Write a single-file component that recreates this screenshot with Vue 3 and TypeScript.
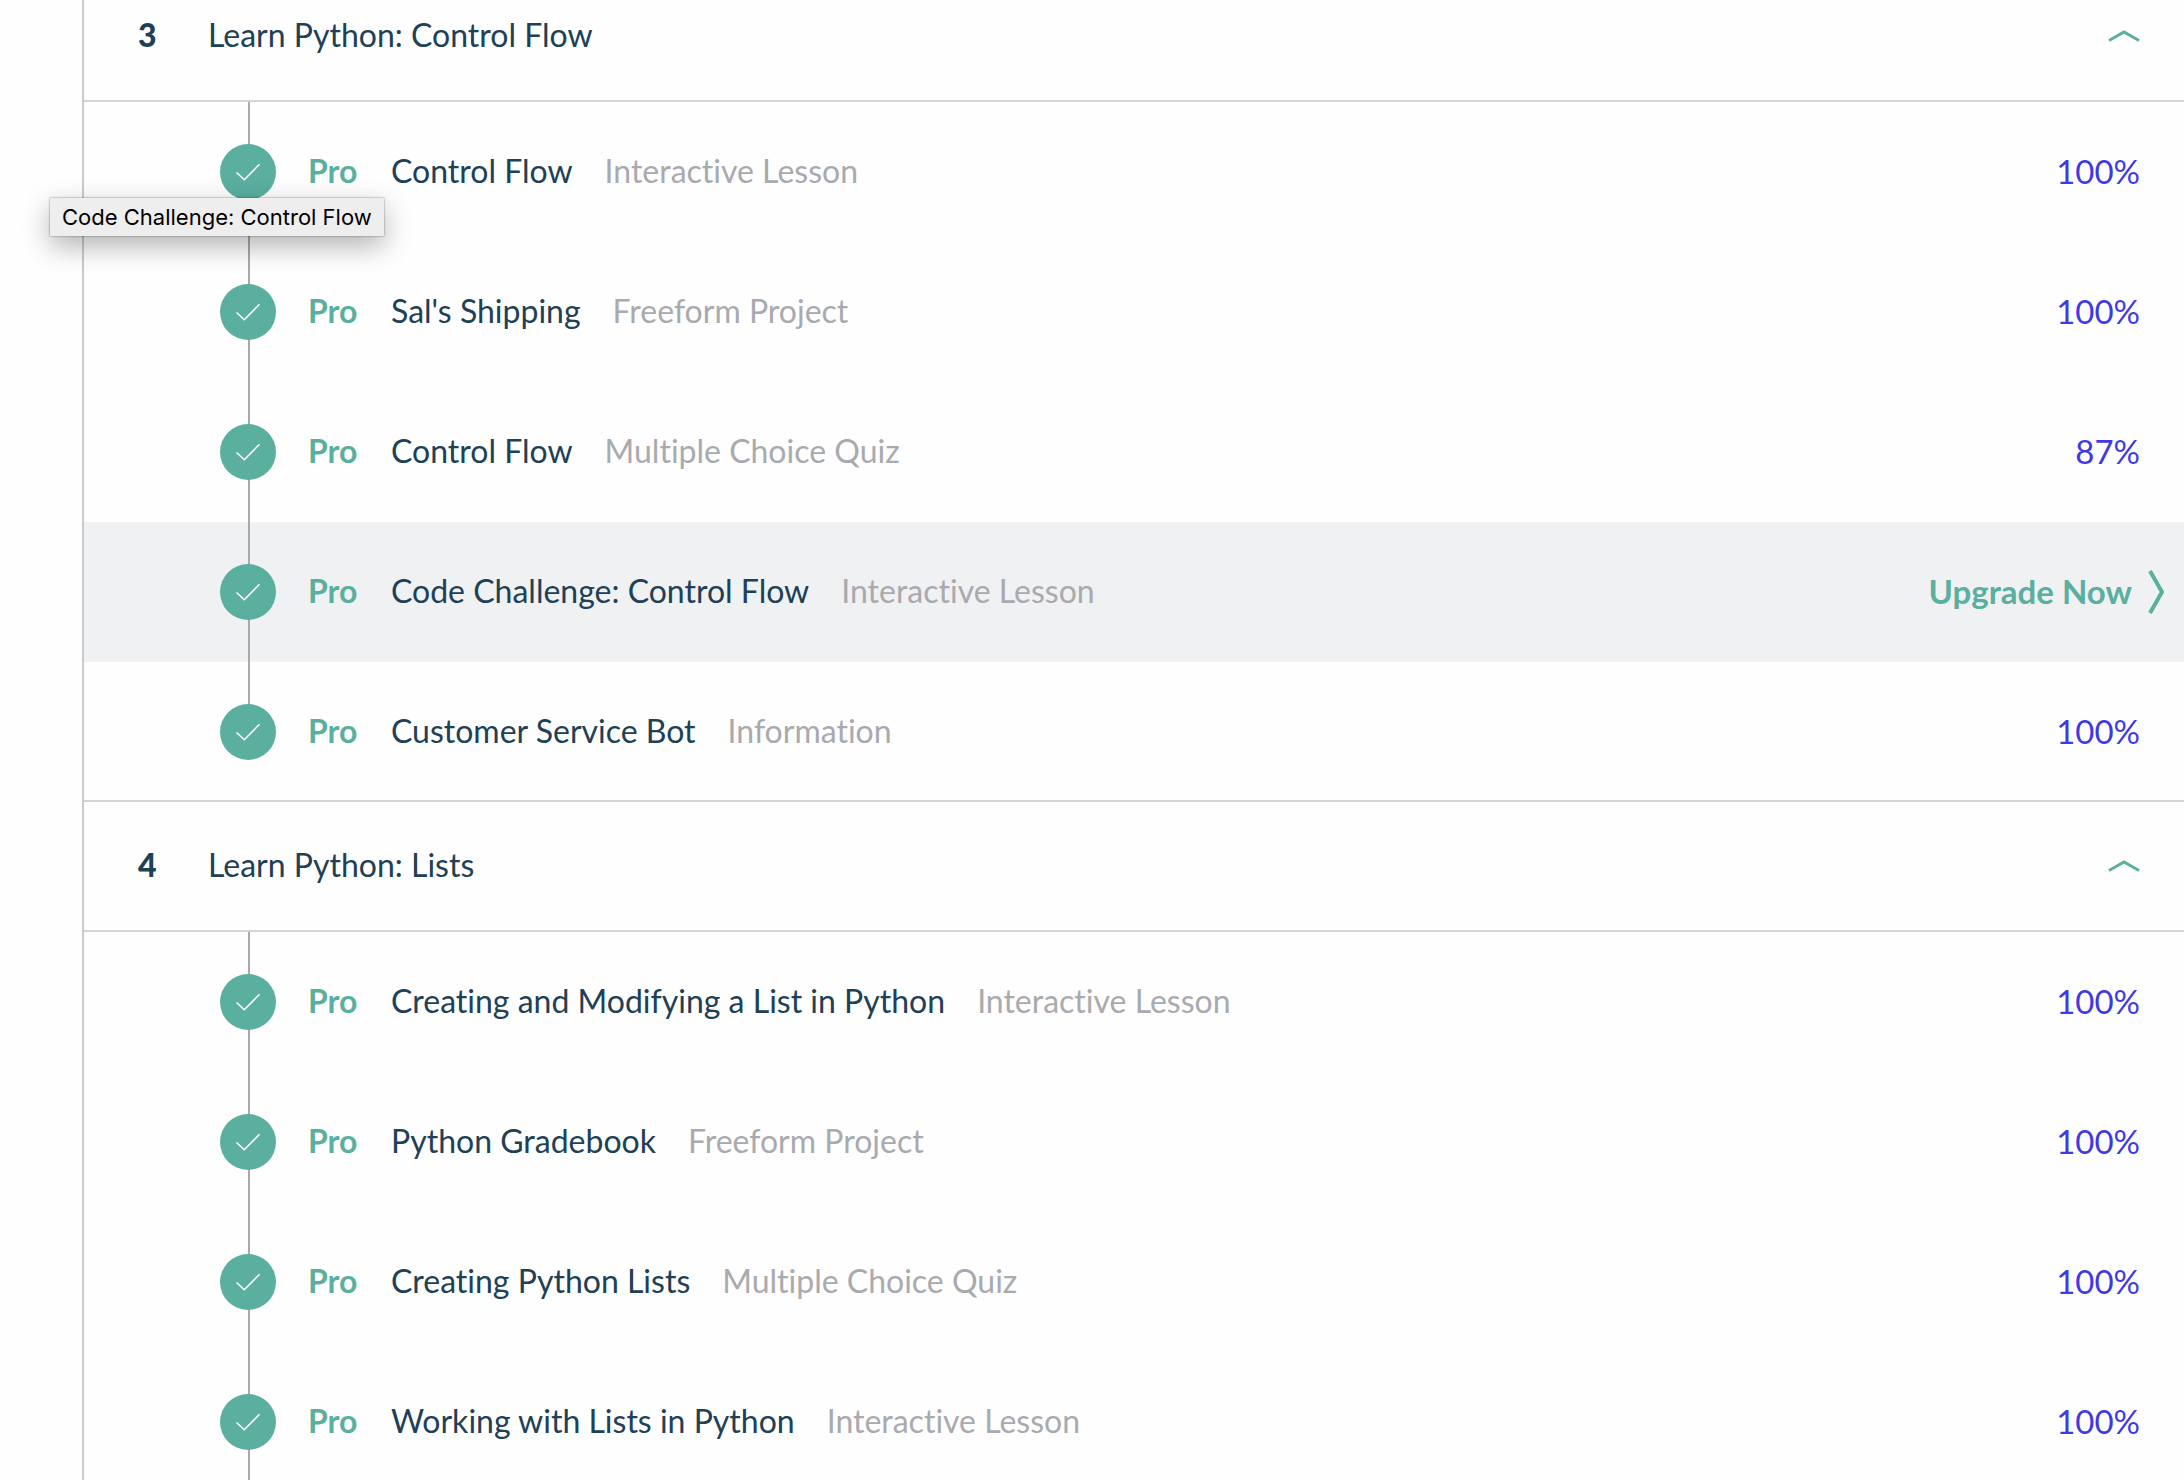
<script setup lang="ts">
import { reactive } from 'vue'

interface Lesson {
  title: string
  kind: string
  score?: string
}

interface Unit {
  number: number
  title: string
  open: boolean
  lessons: Lesson[]
}

const units = reactive<Unit[]>([
  {
    number: 3,
    title: 'Learn Python: Control Flow',
    open: true,
    lessons: [
      { title: 'Control Flow', kind: 'Interactive Lesson', score: '100%' },
      { title: "Sal's Shipping", kind: 'Freeform Project', score: '100%' },
      { title: 'Control Flow', kind: 'Multiple Choice Quiz', score: '87%' },
      { title: 'Code Challenge: Control Flow', kind: 'Interactive Lesson' },
      { title: 'Customer Service Bot', kind: 'Information', score: '100%' },
    ],
  },
  {
    number: 4,
    title: 'Learn Python: Lists',
    open: true,
    lessons: [
      { title: 'Creating and Modifying a List in Python', kind: 'Interactive Lesson', score: '100%' },
      { title: 'Python Gradebook', kind: 'Freeform Project', score: '100%' },
      { title: 'Creating Python Lists', kind: 'Multiple Choice Quiz', score: '100%' },
      { title: 'Working with Lists in Python', kind: 'Interactive Lesson', score: '100%' },
    ],
  },
])
</script>

<template>
  <main class="page">
    <div class="syllabus">
      <section v-for="unit in units" :key="unit.number" class="unit">
        <button class="unit-head" type="button" :aria-expanded="unit.open" @click="unit.open = !unit.open">
          <span class="unit-number">{{ unit.number }}</span>
          <span class="unit-title">{{ unit.title }}</span>
          <svg class="caret" :class="{ closed: !unit.open }" width="32" height="16" viewBox="0 0 32 16" aria-hidden="true">
            <path d="M1 13.5 16 5 31 13.5" />
          </svg>
        </button>
        <ul v-if="unit.open" class="lessons">
          <li
            v-for="lesson in unit.lessons"
            :key="lesson.title + lesson.kind"
            class="lesson"
            :class="{ active: !lesson.score }"
          >
            <svg class="check" width="56" height="56" viewBox="0 0 56 56" aria-hidden="true">
              <circle cx="28" cy="28" r="28" />
              <path d="M16.5 28.5 24.3 35.7 39.5 20.3" />
            </svg>
            <span class="pro">Pro</span>
            <a class="title" href="#">{{ lesson.title }}</a>
            <span class="kind">{{ lesson.kind }}</span>
            <span v-if="lesson.score" class="score">{{ lesson.score }}</span>
            <a v-else class="upgrade" href="#">
              <span>Upgrade Now</span>
              <svg width="16" height="44" viewBox="0 0 16 44" aria-hidden="true">
                <path d="M2 1 14 22 2 43" />
              </svg>
            </a>
          </li>
        </ul>
      </section>
    </div>
    <div class="tooltip" role="tooltip">Code Challenge: Control Flow</div>
  </main>
</template>

<style>
body {
  margin: 0;
  background: #fefefe;
}
</style>

<style scoped>
.page {
  position: relative;
  height: 100vh;
  overflow: hidden;
  font-family: Lato, "Open Sans", sans-serif;
  font-size: 32px;
  font-variant-ligatures: none;
  line-height: 48px;
  color: #204056;
}

/* The list is scrolled part of the way past its first heading. */
.syllabus {
  margin: -28px 0 0 82px;
  border-left: 2px solid #cbcbcc;
}

.unit-head {
  display: flex;
  align-items: center;
  box-sizing: border-box;
  width: 100%;
  height: 130px;
  padding: 0 44px 2px 54px;
  border: 0;
  border-bottom: 2px solid #d4d4d6;
  background: none;
  font: inherit;
  font-variant-ligatures: none;
  color: inherit;
  text-align: left;
  cursor: pointer;
}

.unit-number {
  width: 70px;
  font-weight: 900;
}

.unit-title {
  flex: 1;
}

.caret {
  fill: none;
  stroke: #5aaf9f;
  stroke-width: 3;
}

.caret.closed {
  transform: rotate(180deg);
}

.lessons {
  margin: 0;
  padding: 0;
  list-style: none;
  border-bottom: 2px solid #d4d4d6;
}

.lesson {
  display: flex;
  align-items: center;
  padding: 42px 44px 42px 136px;
  background: linear-gradient(#a9a9ad, #a9a9ad) 164px 0 / 2px 100% no-repeat;
}

.unit:not(:last-child) .lesson:last-child {
  padding-bottom: 40px;
  background-size: 2px 60px;
}

.lesson.active {
  padding-right: 20px;
  background-color: #f0f1f3;
}

.check {
  flex: none;
  margin-right: 32px;
}

.check circle {
  fill: #5aaf9f;
}

.check path {
  fill: none;
  stroke: #fff;
  stroke-width: 1.5;
}

.pro,
.title,
.kind,
.score,
.upgrade span {
  padding-bottom: 2px;
}

.pro {
  min-width: 83px;
  font-weight: 700;
  color: #5aaf9f;
}

.title {
  margin-right: 32px;
  color: inherit;
  text-decoration: none;
}

.kind {
  flex: 1;
  color: #a9aaae;
}

.score {
  font-size: 33px;
  color: #4138e5;
}

.upgrade {
  display: flex;
  align-items: center;
  gap: 16px;
  font-size: 33px;
  font-weight: 700;
  color: #5aaf9f;
  text-decoration: none;
}

.upgrade path {
  fill: none;
  stroke: currentColor;
  stroke-width: 4;
}

.tooltip {
  position: absolute;
  top: 198px;
  left: 50px;
  padding: 0 12px;
  border-radius: 1px;
  background: #eee;
  box-shadow: 0 0 2px rgba(0, 0, 0, 0.55), 0 10px 28px rgba(0, 0, 0, 0.3);
  font-family: Inter, "Liberation Sans", sans-serif;
  font-size: 22px;
  line-height: 38px;
  color: #000;
}
</style>
